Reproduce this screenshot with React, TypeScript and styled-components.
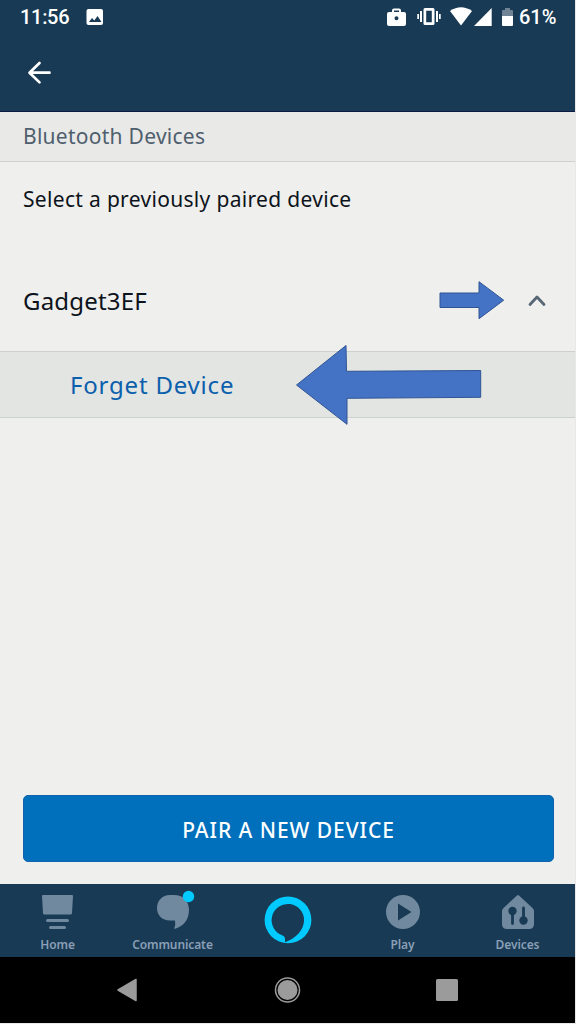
import React from 'react';
import styled, { createGlobalStyle } from 'styled-components';

const GlobalStyle = createGlobalStyle`
  * { box-sizing: border-box; }
  body { margin: 0; background: #efefed; }
`;

const navy = '#183a54';
const slate = '#71899f';

const Screen = styled.div`
  width: 576px;
  height: 1024px;
  display: flex;
  flex-direction: column;
  background: #efefed;
  border-right: 1px solid #e8e8e8;
  border-bottom: 1px solid #e8e8e8;
  font-family: 'Noto Sans', sans-serif;
  overflow: hidden;
`;

const Header = styled.header`
  flex: none;
  height: 112px;
  background: ${navy};
  border-bottom: 1px solid #0c1a45;
  color: #fff;
`;

const StatusBar = styled.div`
  height: 34px;
  display: flex;
  align-items: center;
  padding: 0 18px 0 20px;
  font-family: Roboto, sans-serif;
  font-weight: 500;
  font-size: 20px;
  line-height: 36px;
`;

const Clock = styled.span`
  width: 66px;
  letter-spacing: -0.3px;
`;

const StatusIcons = styled.svg`
  margin-left: auto;
  margin-right: 1px;
  display: block;
`;

const Battery = styled.span`
  width: 38px;
  white-space: nowrap;
`;

const BackButton = styled.button`
  display: block;
  border: 0;
  background: none;
  padding: 26px 0 0 26px;
  line-height: 0;
`;

const SectionTitle = styled.h1`
  flex: none;
  margin: 0;
  height: 50px;
  padding-left: 23px;
  background: #e9e9e8;
  border-bottom: 1px solid #cfd2d0;
  color: #4f5f6e;
  font-weight: 400;
  font-size: 21px;
  line-height: 49px;
  letter-spacing: 0.27px;
`;

const Prompt = styled.p`
  flex: none;
  margin: 0;
  height: 89px;
  padding-left: 23px;
  color: #0d131b;
  font-size: 21px;
  line-height: 75px;
  letter-spacing: 0.32px;
`;

const DeviceRow = styled.div`
  flex: none;
  height: 101px;
  display: flex;
  justify-content: space-between;
  align-items: center;
  padding: 0 28px 0 23px;
  border-bottom: 1px solid #cdd1ce;
  color: #0d131b;
  font-size: 24px;
  letter-spacing: 0.2px;
`;

const DeviceName = styled.span`
  padding-bottom: 1px;
`;

const ForgetRow = styled.div`
  flex: none;
  position: relative;
  height: 66px;
  padding-left: 70px;
  background: #e3e5e2;
  border-bottom: 1px solid #cdd1ce;
  color: #0b60ad;
  font-size: 24px;
  line-height: 65px;
  letter-spacing: 0.8px;
`;

const Pointers = styled.svg`
  position: absolute;
  left: 290px;
  top: -77px;
`;

const Footer = styled.div`
  flex: 1;
  display: flex;
  align-items: flex-end;
  padding: 0 21px 22px 23px;
`;

const PairButton = styled.button`
  width: 100%;
  height: 67px;
  padding: 2px 0 0;
  border: 1px solid #1263ae;
  border-radius: 5px;
  background: #0070bc;
  color: #fff;
  font-family: 'Noto Sans', sans-serif;
  font-weight: 500;
  font-size: 21px;
  letter-spacing: 0.95px;
`;

const TabBar = styled.nav`
  flex: none;
  height: 73px;
  display: grid;
  grid-template-columns: repeat(5, 115px);
  background: ${navy};
`;

const Tab = styled.div`
  display: flex;
  flex-direction: column;
  align-items: center;
  color: #8a9fb6;
  font-weight: 600;
  font-size: 12px;
  line-height: 18px;
  letter-spacing: -0.1px;
`;

const TabLabel = styled.span`
  margin-top: 2px;
`;

const SystemNav = styled.div`
  flex: none;
  height: 66px;
  background: #000;
`;

const tabs = [
  {
    label: 'Home',
    art: (
      <g fill={slate}>
        <path d="M43 11h29q1 0 1 1l-1 17q0 1.500-1.500 1.500h-26q-1.500 0-1.500-1.500l-1-17q0-1 1-1z" />
        <rect x="46" y="35" width="23" height="3" rx="1.500" />
        <rect x="49" y="42" width="17" height="3" rx="1.500" />
      </g>
    ),
  },
  {
    label: 'Communicate',
    art: (
      <g>
        <path fill={slate} d="M55 11h4C68 11 74 17 74 26C74 36 68 43 59 45Q61 41 60 36.500H55C47 36.500 42 31 42 24S47 11 55 11Z" />
        <circle cx="73.500" cy="12.500" r="5.700" fill="#00caff" />
      </g>
    ),
  },
  {
    label: '',
    art: (
      <path
        fill="#00caff"
        fillRule="evenodd"
        d="M58 12.500a23.400 23.400 0 1 0 0 46.800a23.400 23.400 0 1 0 0-46.800zM55 58.300V54.500Q55 52.300 52.700 51.500A16.200 16.200 0 1 1 74 37C73.500 46 66.500 54 55 58.300Z"
      />
    ),
  },
  {
    label: 'Play',
    art: (
      <g>
        <circle cx="58" cy="28" r="17" fill={slate} />
        <path fill={navy} d="M53 19.500L66.500 28L53 36.500Z" />
      </g>
    ),
  },
  {
    label: 'Devices',
    art: (
      <g>
        <path fill={slate} d="M57 11.500Q58 10.500 59 11.500L72.500 24Q74 25.500 74 27V40Q74 45 69 45H47Q42 45 42 40V27Q42 25.500 43.500 24Z" />
        <g fill={navy} stroke={navy}>
          <path strokeWidth="2.800" strokeLinecap="round" d="M52.500 30V39.500M63.500 24V36" />
          <circle cx="52.500" cy="27" r="4.200" stroke="none" />
          <circle cx="63.500" cy="36.500" r="4.200" stroke="none" />
        </g>
      </g>
    ),
  },
];

export default function App() {
  return (
    <>
      <GlobalStyle />
      <Screen>
        <Header>
          <StatusBar>
            <Clock>11:56</Clock>
            <svg width="18" height="18" viewBox="0 0 18 18">
              <rect x="0.500" y="1" width="16.500" height="16" rx="2" fill="#fff" />
              <path d="M3 14l3-4 2.300 2.500 3.200-4.500 4 6z" fill={navy} />
            </svg>
            <StatusIcons width="132" height="34" viewBox="386 0 132 34">
              <g fill="#fff">
                <path fillRule="evenodd" d="M389 12h3v-1.500q0-2 2-2h5q2 0 2 2V12h3q2 0 2 2v10q0 2-2 2h-15q-2 0-2-2V14q0-2 2-2zm5 0h5v-1.500h-5zM396.500 16.300a2 2 0 1 0 0 4 2 2 0 0 0 0-4z" />
                <path fillRule="evenodd" d="M425 8h8q1.500 0 1.500 1.500v14q0 1.500-1.500 1.500h-8q-1.500 0-1.500-1.500v-14Q423.500 8 425 8zm1.200 2.700v11.600h5.600V10.700z" />
                <path d="M420 11h2v11h-2zM417.300 14h1.700v5h-1.700zM436 11h2v11h-2zM439 14h1.700v5H439z" />
                <path d="M450 11Q461 3.500 472 11L461 25.500z" />
                <path d="M474 26L491.700 8v18z" />
                <path d="M502 16h11v9q0 1-1 1h-9q-1 0-1-1z" />
              </g>
              <path fill="#708496" d="M502 16v-5q0-1 1-1h2V8h5v2h2q1 0 1 1v5z" />
            </StatusIcons>
            <Battery>61%</Battery>
          </StatusBar>
          <BackButton aria-label="Back">
            <svg width="28" height="26" viewBox="26 60 28 26" fill="none" stroke="#fff" strokeWidth="2.700" strokeLinecap="round" strokeLinejoin="round">
              <path d="M39.500 63L29.500 72.700L39.500 82.400M30 72.700H49.500" />
            </svg>
          </BackButton>
        </Header>
        <SectionTitle>Bluetooth Devices</SectionTitle>
        <Prompt>Select a previously paired device</Prompt>
        <DeviceRow>
          <DeviceName>Gadget3EF</DeviceName>
          <svg width="20" height="12" viewBox="0 0 20 12" fill="none" stroke="#586776" strokeWidth="2.800" strokeLinecap="round" strokeLinejoin="round">
            <path d="M3 9.500L10 2L17 9.500" />
          </svg>
        </DeviceRow>
        <ForgetRow>
          Forget Device
          <Pointers width="220" height="156" viewBox="290 275 220 156" fill="#4472c4" stroke="#305593" strokeWidth="1">
            <path d="M440 293H479V281.700L503.700 300.200L479 318.700V307.500H440Z" />
            <path d="M296.500 385L346 345.500L346.500 371.300L480.700 370.500V397.300L347 398.300V424.300Z" />
          </Pointers>
        </ForgetRow>
        <Footer>
          <PairButton>PAIR A NEW DEVICE</PairButton>
        </Footer>
        <TabBar>
          {tabs.map((tab, i) => (
            <Tab key={i}>
              <svg width="115" height={tab.label ? 50 : 73} viewBox={`0 0 115 ${tab.label ? 50 : 73}`}>
                {tab.art}
              </svg>
              {tab.label && <TabLabel>{tab.label}</TabLabel>}
            </Tab>
          ))}
        </TabBar>
        <SystemNav>
          <svg width="575" height="66" viewBox="0 0 575 66" fill="#9b9b9b">
            <path stroke="#9b9b9b" strokeWidth="1.500" strokeLinejoin="round" d="M118 33L136 22.500V43.500Z" />
            <circle cx="287.500" cy="33" r="10" />
            <circle cx="287.500" cy="33" r="12" fill="none" stroke="#9b9b9b" strokeWidth="1.500" />
            <rect x="436" y="22" width="22" height="22" rx="1.500" />
          </svg>
        </SystemNav>
      </Screen>
    </>
  );
}
